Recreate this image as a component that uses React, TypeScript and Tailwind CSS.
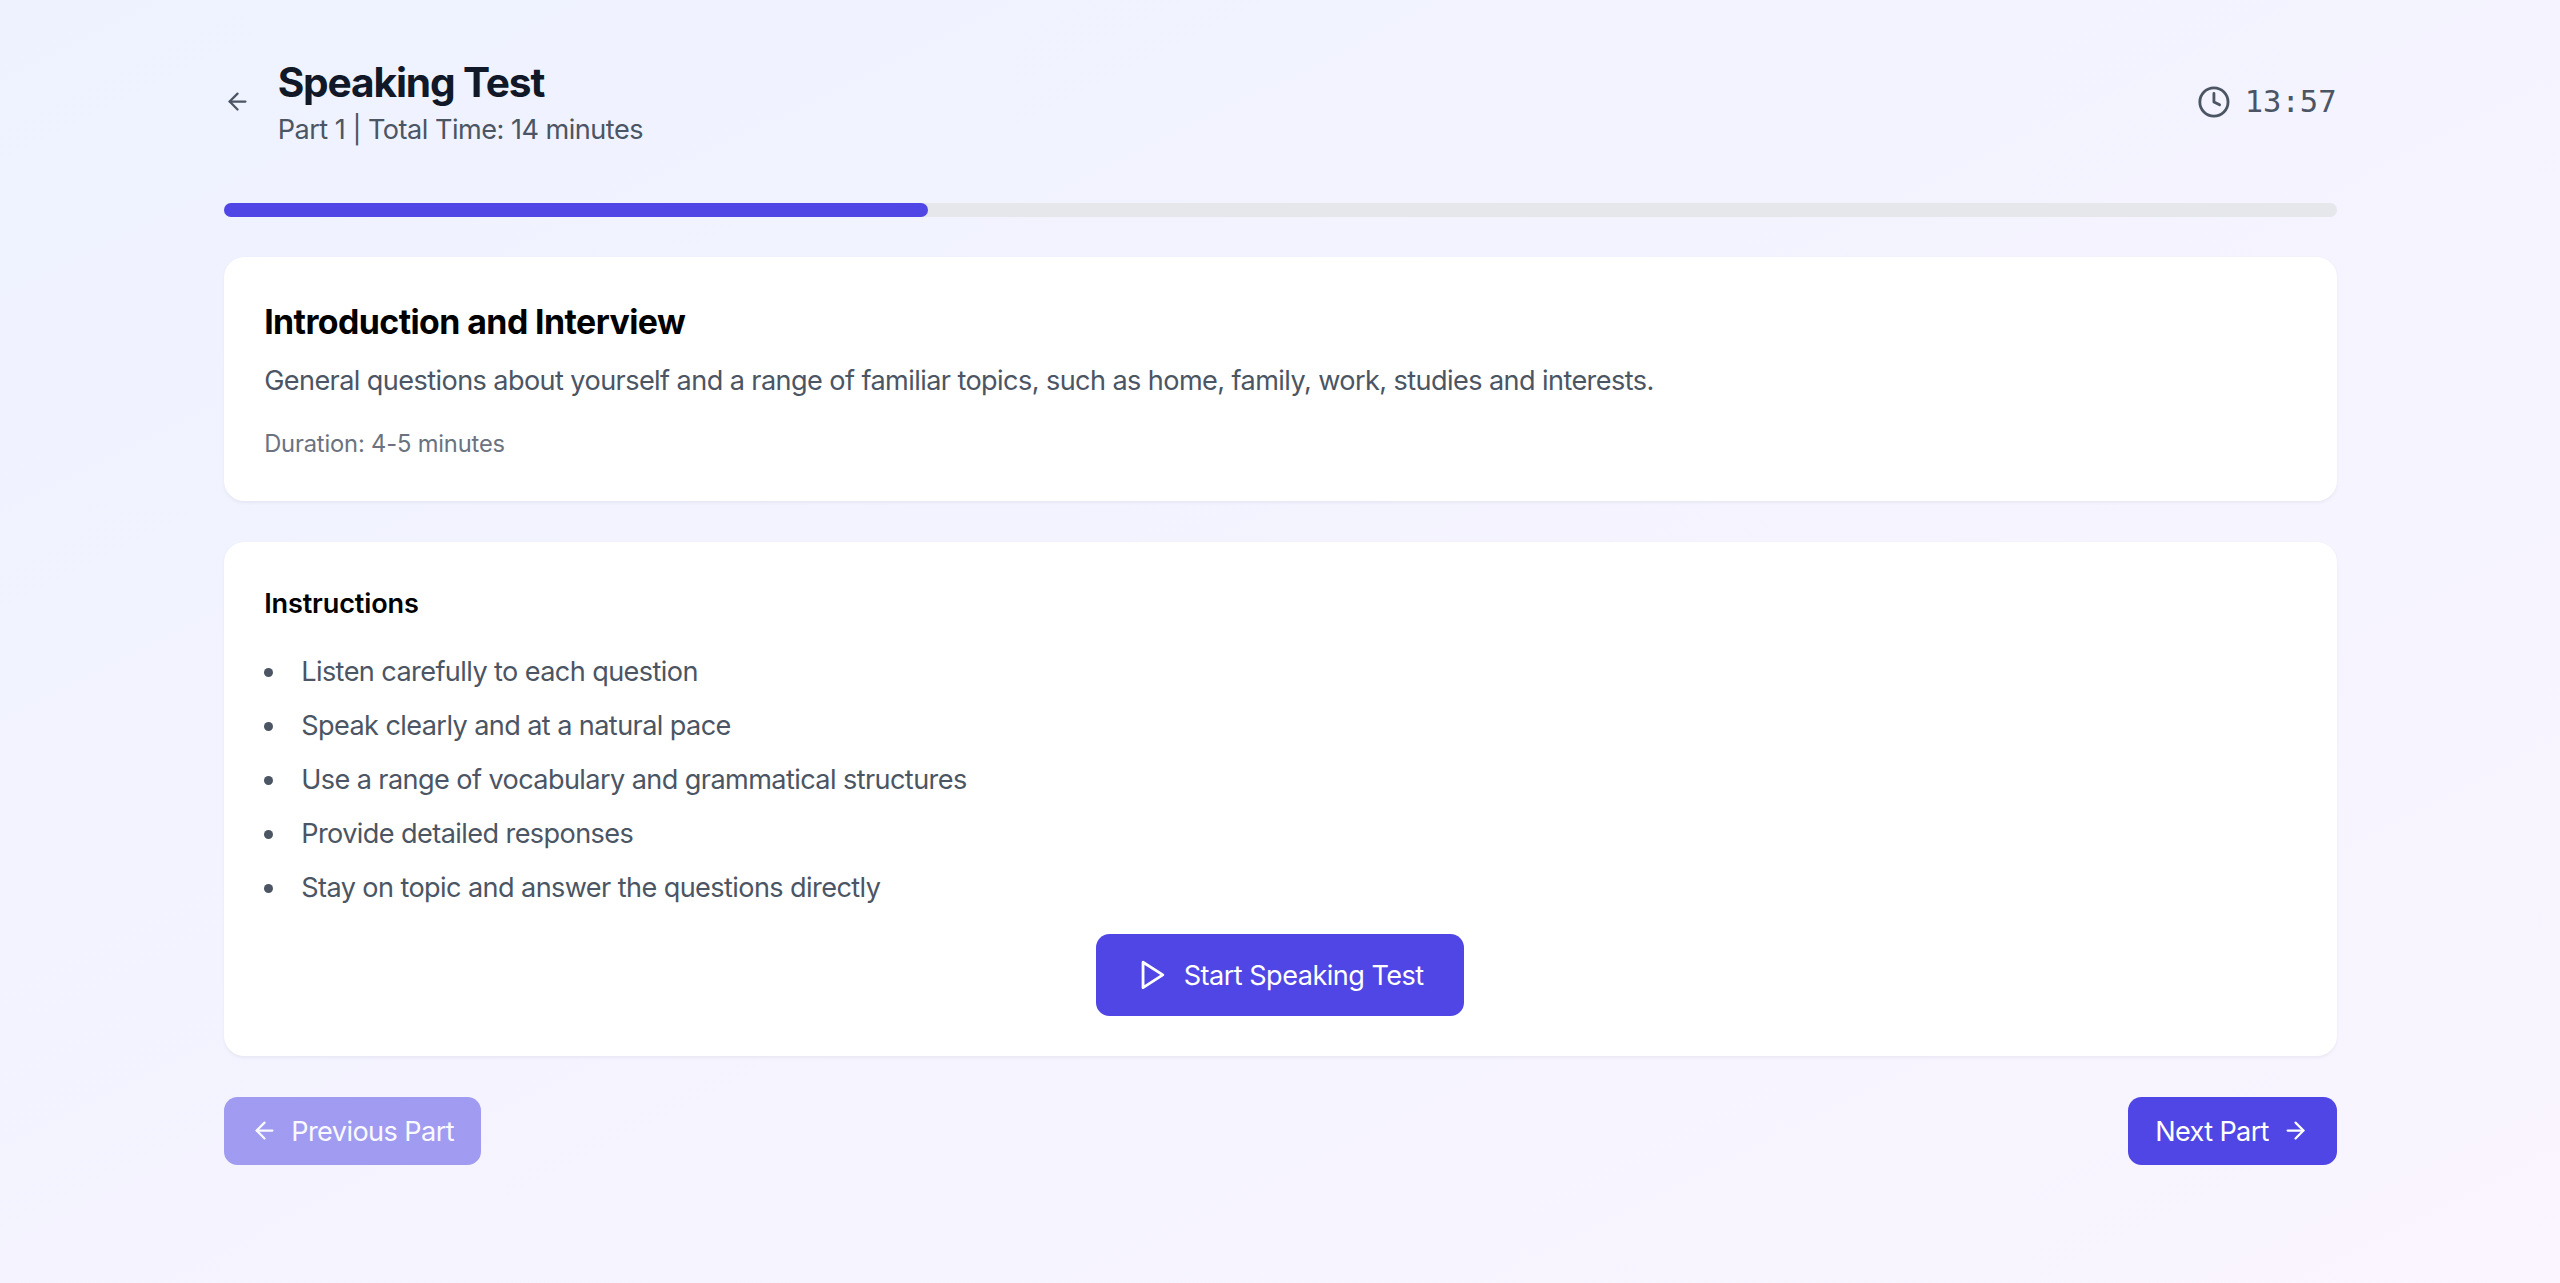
import React from "react";
import { ArrowLeft, ArrowRight, Clock } from "lucide-react";

interface TestPart {
  title: string;
  description: string;
  duration: string;
}

const parts: TestPart[] = [
  {
    title: "Introduction and Interview",
    description:
      "General questions about yourself and a range of familiar topics, such as home, family, work, studies and interests.",
    duration: "4-5 minutes",
  },
  {
    title: "Long Turn",
    description: "Speak about a particular topic using a task card.",
    duration: "3-4 minutes",
  },
  {
    title: "Discussion",
    description: "Further questions connected to the topic in Part 2.",
    duration: "4-5 minutes",
  },
];

const instructions = [
  "Listen carefully to each question",
  "Speak clearly and at a natural pace",
  "Use a range of vocabulary and grammatical structures",
  "Provide detailed responses",
  "Stay on topic and answer the questions directly",
];

const formatTime = (seconds: number) =>
  `${Math.floor(seconds / 60)}:${String(seconds % 60).padStart(2, "0")}`;

const PlayIcon: React.FC = () => (
  <svg
    viewBox="0 0 24 24"
    fill="none"
    stroke="currentColor"
    strokeWidth="2"
    strokeLinecap="round"
    strokeLinejoin="round"
    className="h-5 w-5"
  >
    <polygon points="5 3 19 12 5 21 5 3" />
  </svg>
);

const App: React.FC = () => {
  const currentPart = 0;
  const part = parts[currentPart];

  return (
    <div className="min-h-screen bg-[linear-gradient(to_bottom_right,#eef2ff,#faf5ff)] font-['Inter',sans-serif]">
      <div className="mx-auto max-w-7xl px-4 py-8 [zoom:1.6931]">
        <div className="mb-8 flex items-center justify-between">
          <div className="flex items-center gap-4">
            <button className="text-[#4b5563]">
              <ArrowLeft className="h-4 w-4" />
            </button>
            <div>
              <h1 className="-mb-px pt-px text-2xl font-bold tracking-[-0.028em] text-[#111827]">
                Speaking Test
              </h1>
              <p className="-mb-px pt-px tracking-[-0.0185em] text-[#4b5563]">
                Part {currentPart + 1} | Total Time: 14 minutes
              </p>
            </div>
          </div>
          <div className="flex items-center gap-2 text-[#4b5563]">
            <Clock className="h-5 w-5" />
            <span className="font-['DejaVu_Sans_Mono',monospace] text-lg">
              {formatTime(837)}
            </span>
          </div>
        </div>

        <div className="mb-6 h-2 w-full rounded-full bg-[#e5e7eb]">
          <div
            className="h-2 rounded-full bg-[#4f46e5]"
            style={{ width: `${((currentPart + 1) / parts.length) * 100}%` }}
          />
        </div>

        <div className="mb-6 rounded-xl bg-white p-6 shadow-xs">
          <h2 className="mb-2 text-xl font-bold tracking-[-0.0167em] text-black">
            {part.title}
          </h2>
          <p className="mb-[15px] pt-px tracking-[-0.0213em] text-[#4b5563]">
            {part.description}
          </p>
          <p className="text-sm tracking-[-0.0066em] text-[#6b7280]">
            Duration: {part.duration}
          </p>
        </div>

        <div className="mb-6 rounded-xl bg-white p-6 shadow-xs">
          <h3 className="mb-[15px] pt-px font-semibold tracking-[-0.005em] text-black">
            Instructions
          </h3>
          <ul className="mb-[15px] list-inside list-disc space-y-2 pt-px tracking-[-0.0215em] text-[#4b5563]">
            {instructions.map((item) => (
              <li key={item}>{item}</li>
            ))}
          </ul>
          <div className="flex justify-center">
            <button className="flex h-12 items-center gap-2 rounded-lg bg-[#4f46e5] px-6 text-white">
              <PlayIcon />
              <span className="-mb-px pt-px tracking-[-0.019em]">
                Start Speaking Test
              </span>
            </button>
          </div>
        </div>

        <div className="flex justify-between">
          <button
            disabled
            className="flex items-center gap-2 rounded-lg bg-[#4f46e5] px-4 py-2 text-white opacity-50"
          >
            <ArrowLeft className="h-4 w-4" />
            <span className="-mb-px pt-px tracking-[-0.021em]">
              Previous Part
            </span>
          </button>
          <button className="flex items-center gap-2 rounded-lg bg-[#4f46e5] px-4 py-2 text-white">
            <span className="-mb-px pt-px tracking-[-0.024em]">Next Part</span>
            <ArrowRight className="h-4 w-4" />
          </button>
        </div>
      </div>
    </div>
  );
};

export default App;
